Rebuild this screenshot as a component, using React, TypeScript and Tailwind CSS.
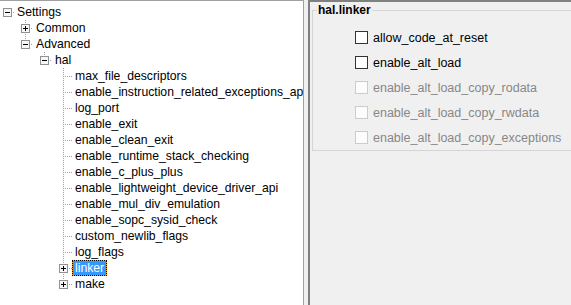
import React from "react";

type Node = {
  label: string;
  level: number;
  kind: "open" | "closed" | "leaf";
  last: boolean;
  selected?: boolean;
};

const CX = [7, 25, 44, 63];
const TX = [17, 36, 55, 75];

const leaves = [
  "max_file_descriptors",
  "enable_instruction_related_exceptions_api",
  "log_port",
  "enable_exit",
  "enable_clean_exit",
  "enable_runtime_stack_checking",
  "enable_c_plus_plus",
  "enable_lightweight_device_driver_api",
  "enable_mul_div_emulation",
  "enable_sopc_sysid_check",
  "custom_newlib_flags",
  "log_flags",
];

const rows: Node[] = [
  { label: "Settings", level: 0, kind: "open", last: true },
  { label: "Common", level: 1, kind: "closed", last: false },
  { label: "Advanced", level: 1, kind: "open", last: true },
  { label: "hal", level: 2, kind: "open", last: true },
  ...leaves.map((l) => ({ label: l, level: 3, kind: "leaf" as const, last: false })),
  { label: "linker", level: 3, kind: "closed", last: false, selected: true },
  { label: "make", level: 3, kind: "closed", last: true },
];

function Connector({ n }: { n: Node }) {
  const w = TX[n.level] - 3;
  const cx = CX[n.level];
  const dots: React.ReactNode[] = [];
  if (n.level > 0) {
    const yEnd = n.last ? 8 : 16;
    for (let y = 0; y < yEnd; y += 2) {
      if (n.kind !== "leaf" && y >= 4 && y <= 12) continue;
      dots.push(<rect key={"v" + y} x={cx} y={y} width={1} height={1} />);
    }
  }
  const hx0 = n.kind === "leaf" ? cx + 2 : cx + 6;
  for (let x = hx0; x < w; x += 2) {
    dots.push(<rect key={"h" + x} x={x} y={8} width={1} height={1} />);
  }
  return (
    <svg width={w} height={16} className="shrink-0 block">
      <g fill="#a0a0a0">{dots}</g>
      {n.kind !== "leaf" && (
        <g>
          <rect x={cx - 4 + 0.5} y={4.5} width={8} height={8} fill="#f7f7f7" stroke="#919191" />
          <rect x={cx - 2} y={8} width={5} height={1} fill="#000" />
          {n.kind === "closed" && <rect x={cx} y={6} width={1} height={5} fill="#000" />}
        </g>
      )}
    </svg>
  );
}

function Row({ n }: { n: Node }) {
  return (
    <div className="flex h-4 items-center">
      <Connector n={n} />
      {n.selected ? (
        <span className="border border-dotted border-black bg-[#f0a030] leading-[14px]">
          <span className="block bg-[#3399ff] px-[2px] text-white">{n.label}</span>
        </span>
      ) : (
        <span className="border border-transparent px-[2px] leading-[14px] whitespace-nowrap text-black">
          {n.label}
        </span>
      )}
    </div>
  );
}

function Check({ label, disabled }: { label: string; disabled?: boolean }) {
  return (
    <div className="flex h-[25px] items-center gap-[5px]">
      <div
        className={
          disabled
            ? "h-[13px] w-[13px] shrink-0 border border-[#cccccc] bg-[#fcfcfc]"
            : "h-[13px] w-[13px] shrink-0 border border-[#333333] bg-white"
        }
      />
      <span className={disabled ? "text-[#878787] leading-[14px]" : "text-black leading-[14px]"}>{label}</span>
    </div>
  );
}

export default function App() {
  return (
    <div className="flex h-[305px] w-[571px] overflow-hidden bg-[#f0f0f0] font-['Liberation_Sans',Arial,sans-serif] text-[12.2px]">
      <div className="w-[304px] shrink-0 overflow-hidden whitespace-nowrap border-r border-t border-[#a0a0a0] bg-white pt-[3px]">
        {rows.map((n, i) => (
          <Row key={i} n={n} />
        ))}
      </div>
      <div className="w-[4px] shrink-0" />
      <div className="min-w-0 flex-1 overflow-hidden border-l-2 border-t-2 border-[#808080] text-[12.5px]">
        <fieldset className="ml-[2px] mt-[1px] w-[280px] border border-[#d5d5d5] pb-[0px] pl-[42px]">
          <legend className="-ml-[38px] px-[1px] text-[12px] font-bold leading-[14px] text-black">hal.linker</legend>
          <div className="flex flex-col pt-[8px]">
            <Check label="allow_code_at_reset" />
            <Check label="enable_alt_load" />
            <Check label="enable_alt_load_copy_rodata" disabled />
            <Check label="enable_alt_load_copy_rwdata" disabled />
            <Check label="enable_alt_load_copy_exceptions" disabled />
          </div>
        </fieldset>
      </div>
    </div>
  );
}
